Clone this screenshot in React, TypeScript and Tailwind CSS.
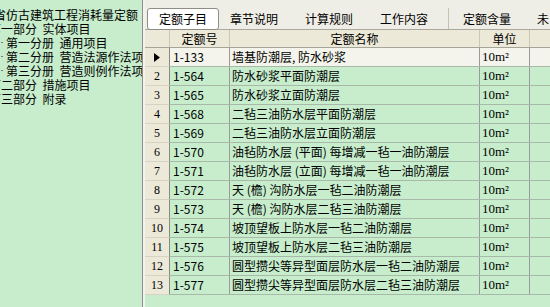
import React from "react";

const rows: [string, string][] = [
  ["1-133", "墙基防潮层, 防水砂浆"],
  ["1-564", "防水砂浆平面防潮层"],
  ["1-565", "防水砂浆立面防潮层"],
  ["1-568", "二毡三油防水层平面防潮层"],
  ["1-569", "二毡三油防水层立面防潮层"],
  ["1-570", "油毡防水层 (平面) 每增减一毡一油防潮层"],
  ["1-571", "油毡防水层 (立面) 每增减一毡一油防潮层"],
  ["1-572", "天 (檐) 沟防水层一毡二油防潮层"],
  ["1-573", "天 (檐) 沟防水层二毡三油防潮层"],
  ["1-574", "坡顶望板上防水层一毡二油防潮层"],
  ["1-575", "坡顶望板上防水层二毡三油防潮层"],
  ["1-576", "圆型攒尖等异型面层防水层一毡二油防潮层"],
  ["1-577", "圆型攒尖等异型面层防水层二毡三油防潮层"],
];

export default function App() {
  return (
    <div className="w-[550px] h-[307px] flex overflow-hidden bg-[#ece9d8] text-[12px] text-black font-['Noto_Sans_CJK_SC',sans-serif]">
      {/* Left tree */}
      <div className="w-[143px] shrink-0 h-full bg-[#c7edcc] border-r border-[#8f8f8f] overflow-hidden pt-[8px] leading-[14px] whitespace-nowrap">
        <div className="ml-[-6px]">省仿古建筑工程消耗量定额</div>
        <div className="ml-[-11px]">第一部分&nbsp;&nbsp;实体项目</div>
        <div className="relative ml-[6px]">
          <span className="absolute left-[-5px] top-[6px] w-[2px] h-[1px] bg-[#7a7a7a]" />
          第一分册&nbsp;&nbsp;通用项目
        </div>
        <div className="relative ml-[6px]">
          <span className="absolute left-[-5px] top-[6px] w-[2px] h-[1px] bg-[#7a7a7a]" />
          第二分册&nbsp;&nbsp;营造法源作法项目
        </div>
        <div className="relative ml-[6px]">
          <span className="absolute left-[-5px] top-[6px] w-[2px] h-[1px] bg-[#7a7a7a]" />
          第三分册&nbsp;&nbsp;营造则例作法项目
        </div>
        <div className="ml-[-11px]">第二部分&nbsp;&nbsp;措施项目</div>
        <div className="ml-[-11px]">第三部分&nbsp;&nbsp;附录</div>
      </div>
      {/* splitter */}
      <div className="w-[2px] shrink-0 h-full bg-[#f3f2ec]" />
      {/* Right panel */}
      <div className="flex-1 h-full flex flex-col min-w-0">
        {/* Tab bar */}
        <div className="h-[30px] shrink-0 bg-[#efeee6] border-b border-[#a9a89e] flex items-end whitespace-nowrap">
          <div className="ml-[2px] w-[72px] h-[22px] mb-[-1px] bg-white border border-[#8e8e86] rounded-[3px] flex items-center justify-center">
            定额子目
          </div>
          <div className="h-[21px] flex items-center ml-[11px]">章节说明</div>
          <div className="h-[21px] flex items-center ml-[27px]">计算规则</div>
          <div className="h-[21px] flex items-center ml-[27px]">工作内容</div>
          <div className="ml-[20px] w-[1px] h-[21px] bg-[#c3c2b8]" />
          <div className="h-[21px] flex items-center ml-[14px]">定额含量</div>
          <div className="h-[21px] flex items-center ml-[26px]">未</div>
        </div>
        {/* Header */}
        <div className="h-[18px] shrink-0 flex bg-[#ece9d8] border-b border-[#a6a599]">
          <div className="w-[25px] border-r border-[#c9c7ba]" />
          <div className="w-[60px] border-r border-[#c9c7ba] flex items-center justify-center">定额号</div>
          <div className="w-[250px] border-r border-[#c9c7ba] flex items-center justify-center">定额名称</div>
          <div className="w-[50px] border-r border-[#c9c7ba] flex items-center justify-center">单位</div>
          <div className="flex-1" />
        </div>
        {/* Body */}
        <div className="flex-1 bg-[#c7edcc]">
          {rows.map(([code, name], i) => {
            const sel = i === 0;
            return (
              <div key={code} className="h-[19px] flex">
                <div className="w-[25px] shrink-0 bg-[#ece9d8] border-r border-[#8a8a80] border-b border-b-[#d6d3c4] flex items-center justify-center text-[12px] font-['Liberation_Serif',serif]">
                  {sel ? (
                    <svg width="6" height="9" viewBox="0 0 6 9">
                      <polygon points="0,0 6,4.5 0,9" fill="#000" />
                    </svg>
                  ) : (
                    i + 1
                  )}
                </div>
                <div
                  className={`flex-1 flex border-b border-[#a9b9a9] ${sel ? "bg-[#f4f4ec]" : "bg-[#c7edcc]"}`}
                >
                  <div className="w-[60px] shrink-0 border-r border-[#9a9a9a] flex items-center pl-[3px]">
                    {code}
                  </div>
                  <div className="w-[250px] shrink-0 border-r border-[#9a9a9a] flex items-center pl-[2px] whitespace-nowrap overflow-hidden">
                    {name}
                  </div>
                  <div className="w-[50px] shrink-0 border-r border-[#9a9a9a] flex items-center pl-[2px] font-['Liberation_Serif',serif] text-[13px]">
                    10m²
                  </div>
                  <div className="flex-1" />
                </div>
              </div>
            );
          })}
        </div>
      </div>
    </div>
  );
}
